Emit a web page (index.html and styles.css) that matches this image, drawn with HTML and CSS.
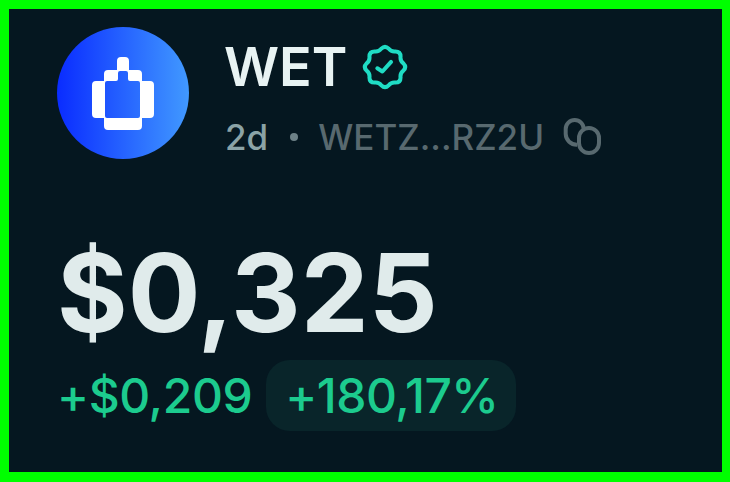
FILE: index.html
```html
<!doctype html>
<html lang="en">
<head>
	<meta charset="UTF-8">
	<title>WET</title>
	<link rel="stylesheet" href="styles.css">
</head>
<body>
	<div class="frame">
		<div class="head">
			<div class="logo">
				<svg class="logo-mark" width="62" height="73" viewBox="0 0 62 73">
					<path fill="#fff" fill-rule="evenodd" d="M29 0 H33 a4 4 0 0 1 4 4 V13 H46 a4 4 0 0 1 4 4 V24 H58 a4 4 0 0 1 4 4 V57 a4 4 0 0 1 -4 4 H50 V69 a4 4 0 0 1 -4 4 H16 a4 4 0 0 1 -4 -4 V61 H4 a4 4 0 0 1 -4 -4 V28 a4 4 0 0 1 4 -4 H12 V17 a4 4 0 0 1 4 -4 H25 V4 a4 4 0 0 1 4 -4 Z M28 14 a2 2 0 0 0 -2 2 V22 a2 2 0 0 1 -2 2 H15 a2 2 0 0 0 -2 2 V59 a2 2 0 0 0 2 2 H46 a2 2 0 0 0 2 -2 V26 a2 2 0 0 0 -2 -2 H38 a2 2 0 0 1 -2 -2 V16 a2 2 0 0 0 -2 -2 Z"/>
				</svg>
			</div>
			<div class="info">
				<div class="name-row">
					<span class="name">WET</span>
					<svg class="badge" width="48" height="48" viewBox="-25 -25 50 50" fill="none" stroke="#1fdcc4" stroke-width="4.200" stroke-linecap="round" stroke-linejoin="round">
						<path d="M3.8 -19.13 Q6.47 -15.61 10.84 -16.2 Q16.19 -16.19 16.2 -10.84 Q15.61 -6.47 19.13 -3.8 Q22.9 0 19.13 3.8 Q15.61 6.47 16.2 10.84 Q16.19 16.19 10.84 16.2 Q6.47 15.61 3.8 19.13 Q0 22.9 -3.8 19.13 Q-6.47 15.61 -10.84 16.2 Q-16.19 16.19 -16.2 10.84 Q-15.61 6.47 -19.13 3.8 Q-22.9 0 -19.13 -3.8 Q-15.61 -6.47 -16.2 -10.84 Q-16.19 -16.19 -10.84 -16.2 Q-6.47 -15.61 -3.8 -19.13 Q0 -22.9 3.8 -19.13 Z"/>
						<path d="M-8 1.300 L-2.700 4.700 L6.300 -5.300"/>
					</svg>
				</div>
				<div class="meta-row">
					<span class="age">2d</span>
					<span class="dot"></span>
					<span class="addr">WETZ...RZ2U</span>
					<svg class="copy" width="40" height="42" viewBox="0 0 40 42" fill="none" stroke="#58696f" stroke-width="4">
						<path d="M15 28.700 A11 11 0 0 1 3.700 18 V13 A9 9 0 0 1 21.700 13"/>
						<rect x="17" y="12" width="20" height="25" rx="10"/>
					</svg>
				</div>
			</div>
		</div>
		<div class="price">$0,325</div>
		<div class="change-row">
			<span class="change">+$0,209</span>
			<span class="pct">+180,17%</span>
		</div>
	</div>
</body>
</html>
```

FILE: styles.css
```css
* {
	margin: 0;
	padding: 0;
	box-sizing: border-box;
}

body {
	width: 730px;
	height: 482px;
	overflow: hidden;
	font-family: Inter, "Liberation Sans", sans-serif;
}

.frame {
	width: 730px;
	height: 482px;
	background: #051720;
	border: solid #00ff00;
	border-width: 9px 8px 10px 9px;
	padding: 18px 0 0 48px;
}

.head {
	display: flex;
	align-items: flex-start;
	gap: 35px;
}

.logo {
	width: 132px;
	height: 132px;
	border-radius: 50%;
	background: linear-gradient(90deg, #0a2cff, #4199ff);
	display: flex;
	align-items: center;
	justify-content: center;
}

.info {
	padding-top: 8px;
}

.name-row {
	display: flex;
	align-items: center;
	gap: 14px;
	height: 64px;
}

.name {
	font-size: 54px;
	font-weight: 600;
	color: #e8f3f3;
	line-height: 64px;
}

.meta-row {
	display: flex;
	align-items: center;
	margin-top: 18px;
	height: 40px;
}

.age {
	font-size: 35px;
	font-weight: 500;
	color: #8ba3a6;
	margin-left: 1px;
}

.dot {
	width: 8px;
	height: 8px;
	border-radius: 50%;
	background: #6d8187;
	margin: 0 20px 0 22px;
}

.addr {
	font-size: 35px;
	font-weight: 500;
	color: #58696f;
}

.copy {
	margin-left: 18px;
}

.price {
	font-size: 108px;
	font-weight: 700;
	color: #e0ebeb;
	line-height: 120px;
	margin-top: 74px;
}

.change-row {
	display: flex;
	align-items: center;
	gap: 14px;
	margin-top: 7px;
}

.change {
	font-size: 48px;
	font-weight: 500;
	letter-spacing: -0.4px;
	color: #1ccb8e;
}

.pct {
	font-size: 48px;
	font-weight: 500;
	letter-spacing: -0.5px;
	color: #1ccb8e;
	background: #09252a;
	border-radius: 24px;
	height: 71px;
	line-height: 71px;
	padding: 0 17px 0 19px;
}
```
